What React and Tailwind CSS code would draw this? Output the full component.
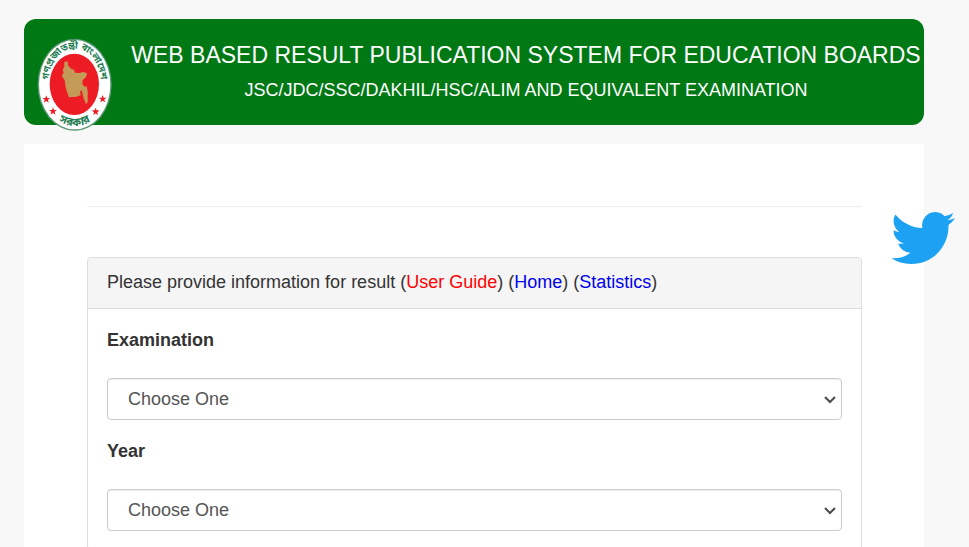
// src/App.jsx
import React, { useState } from 'react';

const STAR = 'M0 -12 L3 -4 L11.6 -3.7 L4.8 1.6 L7.2 10 L0 5.2 L-7.2 10 L-4.8 1.6 L-11.6 -3.7 L-3 -4 Z';

const Seal = () => (
    <svg viewBox="66 81 228 288" className="h-24 w-[76px] shrink-0" role="img" aria-label="Government seal">
        <ellipse cx="182" cy="224" rx="111" ry="138" fill="#5f9c7a" />
        <ellipse cx="182" cy="224" rx="107" ry="134" fill="#ffffff" />
        <ellipse cx="181" cy="223" rx="74" ry="92" fill="#ed1c24" />
        {/* map */}
        <path
            d="M151 156 L161 154 L162 166 L172 177 L180 179 L183 188 L196 189 L208 186 L219 190 L216 201 L206 211 L205 222 L214 232 L218 227 L221 244 L221 275 L216 283 L208 262 L203 240 L198 246 L200 256 L187 260 L165 262 L159 246 L154 227 L152 210 L143 198 L149 188 L146 180 L151 170 Z"
            fill="#c49a57"
        />
        {/* stars */}
        <g fill="#ed1c24">
            <path d={STAR} transform="translate(97 268)" />
            <path d={STAR} transform="translate(117 304)" />
            <path d={STAR} transform="translate(266 267)" />
            <path d={STAR} transform="translate(245 305)" />
        </g>
        <defs>
            <path id="seal-top" d="M103 236 C96 76 266 76 261 236" />
            <path id="seal-bottom" d="M120 325 Q182 370 244 325" />
        </defs>
        <g className="font-['Noto_Sans_Bengali','Noto_Sans',sans-serif] font-bold" fill="#1f7d52" textAnchor="middle">
            <text fontSize="29">
                <textPath href="#seal-top" startOffset="50%">গণপ্রজাতন্ত্রী বাংলাদেশ</textPath>
            </text>
            <text fontSize="34">
                <textPath href="#seal-bottom" startOffset="50%">সরকার</textPath>
            </text>
        </g>
    </svg>
);

const TwitterBird = () => (
    <svg viewBox="0 0 24 24" className="size-16" fill="#1da1f2" aria-hidden="true">
        <path d="M23.953 4.57a10 10 0 01-2.825.775 4.958 4.958 0 002.163-2.723c-.951.555-2.005.959-3.127 1.184a4.92 4.92 0 00-8.384 4.482C7.69 8.095 4.067 6.13 1.64 3.162a4.822 4.822 0 00-.666 2.475c0 1.71.87 3.213 2.188 4.096a4.904 4.904 0 01-2.228-.616v.06a4.923 4.923 0 003.946 4.827 4.996 4.996 0 01-2.212.085 4.936 4.936 0 004.604 3.417 9.867 9.867 0 01-6.102 2.105c-.39 0-.779-.023-1.17-.067a13.995 13.995 0 007.557 2.209c9.053 0 13.998-7.496 13.998-13.985 0-.21 0-.42-.015-.63A9.935 9.935 0 0024 4.59z" />
    </svg>
);

const SelectField = ({ id, label, options, value, onChange }) => (
    <div className="mb-[18px]">
        <label htmlFor={id} className="mb-[25px] block text-lg leading-[26px] font-bold text-[#333333]">
            {label}
        </label>
        <div className="relative">
            <select
                id={id}
                value={value}
                onChange={(e) => onChange(e.target.value)}
                className="block h-[42px] w-full appearance-none rounded border border-[#cccccc] bg-white pl-5 text-lg text-[#555555] shadow-[inset_0_1px_1px_rgba(0,0,0,0.075)]"
            >
                <option value="">Choose One</option>
                {options.map((option) => (
                    <option key={option} value={option}>{option}</option>
                ))}
            </select>
            <svg
                viewBox="0 0 12 8"
                className="pointer-events-none absolute top-[18px] right-[6px] h-2 w-3"
                fill="none"
                stroke="#4a4a4a"
                strokeWidth="2"
                aria-hidden="true"
            >
                <path d="M1 1 L6 6 L11 1" />
            </svg>
        </div>
    </div>
);

const App = () => {
    const [exam, setExam] = useState('');
    const [year, setYear] = useState('');

    return (
        <div className="relative h-screen overflow-hidden bg-[#f8f8f8] pt-[19px] pr-[45px] pl-6 font-['Liberation_Sans',Arial,sans-serif]">
            <header className="flex h-[106px] items-start rounded-xl bg-[#007814] pt-[18px] pl-3 text-white">
                <Seal />
                <div className="flex-1 pt-px pl-4 text-center">
                    <h1 className="text-[23px] leading-[34px] whitespace-nowrap">
                        WEB BASED RESULT PUBLICATION SYSTEM FOR EDUCATION BOARDS
                    </h1>
                    <h2 className="text-lg leading-9 whitespace-nowrap">
                        JSC/JDC/SSC/DAKHIL/HSC/ALIM AND EQUIVALENT EXAMINATION
                    </h2>
                </div>
            </header>

            <main className="mt-[19px] min-h-screen bg-white pt-[62px] pr-[62px] pl-[63px]">
                <hr className="mb-[50px] border-[#eeeeee]" />
                <section className="rounded border border-[#dddddd] bg-white">
                    <div className="rounded-t border-b border-[#dddddd] bg-[#f5f5f5] px-[19px] pt-[11px] pb-[13px] text-lg leading-[26px] text-[#333333]">
                        Please provide information for result (
                        <a href="#guide" className="text-[#ff0000]">User Guide</a>) (
                        <a href="#home" className="text-[#0000ee]">Home</a>) (
                        <a href="#statistics" className="text-[#0000ee]">Statistics</a>)
                    </div>
                    <form className="px-[19px] pt-[18px]">
                        <SelectField
                            id="exam"
                            label="Examination"
                            options={['JSC/JDC', 'SSC/Dakhil', 'HSC/Alim']}
                            value={exam}
                            onChange={setExam}
                        />
                        <SelectField
                            id="year"
                            label="Year"
                            options={['2023', '2022', '2021']}
                            value={year}
                            onChange={setYear}
                        />
                    </form>
                </section>
            </main>

            <a href="#twitter" aria-label="Twitter" className="absolute top-[206px] right-[14px]">
                <TwitterBird />
            </a>
        </div>
    );
};

export default App;
